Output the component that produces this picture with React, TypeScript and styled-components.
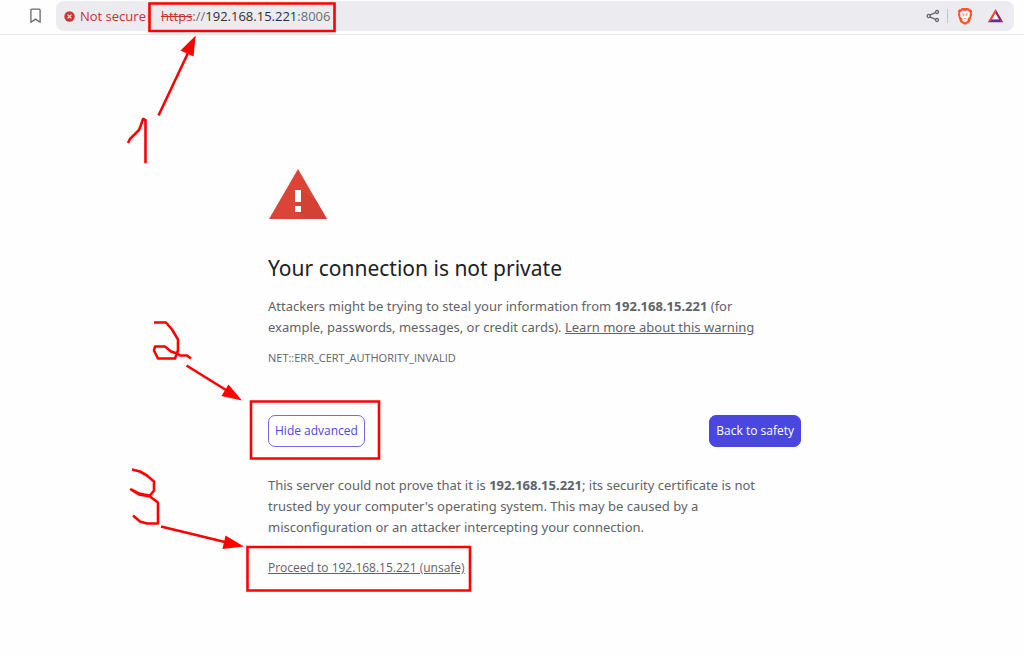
import React from "react";
import styled, { createGlobalStyle } from "styled-components";

const Global = createGlobalStyle`
  * { box-sizing: border-box; }
  body {
    margin: 0;
    background: #fefefe;
    color: #5f6368;
    font-family: "Noto Sans", sans-serif;
    font-size: 13px;
    line-height: 21px;
  }
`;

const Page = styled.div`
  position: relative;
  min-height: 100vh;
`;

const Toolbar = styled.header`
  display: flex;
  align-items: center;
  height: 35px;
  padding: 0 10px 2px 28px;
  border-bottom: 1px solid #e6e6e8;
`;

const IconButton = styled.button`
  display: flex;
  padding: 0;
  border: 0;
  background: none;
`;

const AddressBar = styled.div`
  display: flex;
  flex: 1;
  align-items: center;
  height: 30px;
  margin-left: 12px;
  padding: 0 10px 0 8px;
  border-radius: 8px;
  background: #ebebf0;
`;

const Security = styled.button`
  display: flex;
  align-items: center;
  gap: 5px;
  padding: 0;
  border: 0;
  background: none;
  color: #c5332b;
  font: 13px/20px "Open Sans", "Noto Sans", sans-serif;
  white-space: nowrap;
`;

const Url = styled.div`
  flex: 1;
  margin-left: 15px;
  color: #6b6e73;
  font-family: "Open Sans", "Noto Sans", sans-serif;
  font-size: 13px;
  line-height: 20px;
`;

const Scheme = styled.s`
  color: #c5332b;
`;

const Host = styled.span`
  color: #303136;
`;

const Actions = styled.div`
  display: flex;
  align-items: center;
`;

const Divider = styled.span`
  width: 1px;
  height: 14px;
  margin: 0 9px 0 7px;
  background: #c3c4ca;
`;

const Shields = styled(IconButton)`
  margin-right: 14px;
`;

const Warning = styled.main`
  max-width: 801px;
  margin: 134px 0 0;
  padding: 0 0 48px 268px;
`;

const Sign = styled.svg`
  display: block;
`;

const Title = styled.h1`
  margin: 32px 0 12px;
  color: #202124;
  font-size: 21px;
  font-weight: 400;
  line-height: 32px;
`;

const Text = styled.p`
  max-width: 512px;
  margin: 0;
`;

const TextLink = styled.a`
  color: inherit;
  text-decoration: underline;
`;

const ErrorCode = styled.div`
  margin-top: 10px;
  font-family: "Open Sans", "Noto Sans", sans-serif;
  font-size: 11px;
  line-height: 20px;
`;

const Buttons = styled.div`
  display: flex;
  justify-content: space-between;
  margin: 47px 0 28px;
`;

const Button = styled.button<{ $primary?: boolean }>`
  height: 32px;
  padding: 0 6px;
  border: 1px solid ${(p) => (p.$primary ? "#4a46e0" : "#716dea")};
  border-radius: 7px;
  background: ${(p) => (p.$primary ? "#4a46e0" : "#ffffff")};
  color: ${(p) => (p.$primary ? "#ffffff" : "#4c48dc")};
  font: 12px/20px "Open Sans", "Noto Sans", sans-serif;
  white-space: nowrap;
`;

const Proceed = styled.p`
  margin: 19px 0 0;
  font-family: "Open Sans", "Noto Sans", sans-serif;
  font-size: 12px;
`;

const Annotations = styled.svg`
  position: absolute;
  top: 0;
  left: 0;
  pointer-events: none;
`;

export default function App() {
  return (
    <Page>
      <Global />
      <Toolbar>
        <IconButton aria-label="Bookmark this page">
          <svg width="16" height="18" viewBox="0 0 16 18" fill="none" stroke="#66676d" strokeWidth="1.3">
            <path d="M3.9 2.1h7.2q1 0 1 1v12.2l-4.6-3.2-4.6 3.2V3.1q0-1 1-1z" strokeLinejoin="round" />
          </svg>
        </IconButton>
        <AddressBar>
          <Security>
            <svg width="11" height="11" viewBox="0 0 11 11">
              <circle cx="5.5" cy="5.5" r="5.2" fill="#c9372f" />
              <path d="M3.6 3.6l3.8 3.8M7.4 3.6L3.6 7.4" stroke="#ebebf0" strokeWidth="1.3" />
            </svg>
            Not secure
          </Security>
          <Url>
            <Scheme>https</Scheme>://<Host>192.168.15.221</Host>:8006
          </Url>
          <Actions>
            <IconButton aria-label="Share">
              <svg width="14" height="14" viewBox="0 0 14 14" fill="none" stroke="#66676d" strokeWidth="1.3">
                <path d="M3.7 6.2l5.8-2.5M3.7 7.8l5.8 2.5" />
                <circle cx="2.7" cy="7" r="1.6" />
                <circle cx="11" cy="3" r="1.5" />
                <circle cx="11" cy="11" r="1.5" />
              </svg>
            </IconButton>
            <Divider />
            <Shields aria-label="Brave Shields">
              <svg width="16" height="18" viewBox="0 0 16 18">
                <path d="M4.8 1h6.4l1.3 1.4 1.4-.2 1.3 2-.6 1.6.5 1.7-2 6.7q-.4 1-1.3 1.6L8.7 17.6q-.7.4-1.4 0l-3.1-1.8q-.9-.6-1.3-1.6l-2-6.7.5-1.7-.6-1.6 1.3-2 1.4.2z" fill="#fb542b" />
                <path d="M5.2 3.5L8 4l2.8-.5 2.4 2.7-.7 1.7.2 1.6-2.2 2.6.3 1.3L8 15.5l-2.8-2.1.3-1.3-2.2-2.6.2-1.6-.7-1.7z" fill="#fff" />
                <path d="M5 6.8l1.9.5-.3 2M11 6.8l-1.9.5.3 2M6.7 11.8L8 11.2l1.3.6" fill="none" stroke="#fb542b" strokeWidth=".7" />
              </svg>
            </Shields>
            <IconButton aria-label="Brave Rewards">
              <svg width="17" height="16" viewBox="0 0 17 16">
                <path d="M8.5 1L.7 14.2 5.2 11.3 8.5 5.4z" fill="#ff4724" />
                <path d="M8.5 1l7.8 13.2-4.5-2.9L8.5 5.4z" fill="#9e1f63" />
                <path d="M.7 14.2h15.6l-4.5-2.9H5.2z" fill="#662d91" />
                <path d="M8.5 5.4l3.3 5.9H5.2z" fill="#fff" />
              </svg>
            </IconButton>
          </Actions>
        </AddressBar>
      </Toolbar>

      <Warning>
        <Sign width="60" height="51" viewBox="0 0 60 51" role="img" aria-label="Warning">
          <path d="M30 0l29 50H1z" fill="#db4437" />
          <path d="M33 21l15 10 11 19H37l-9-8 5-1-6-7 6-1z" fill="#cf4034" opacity=".65" />
          <path d="M27 21h6v12h-6zM27 37h6v6h-6z" fill="#fff" />
        </Sign>
        <Title>Your connection is not private</Title>
        <Text>
          Attackers might be trying to steal your information from <b>192.168.15.221</b> (for
          example, passwords, messages, or credit cards). <TextLink href="#learn-more">Learn more about this warning</TextLink>
        </Text>
        <ErrorCode>NET::ERR_CERT_AUTHORITY_INVALID</ErrorCode>
        <Buttons>
          <Button>Hide advanced</Button>
          <Button $primary>Back to safety</Button>
        </Buttons>
        <Text>
          This server could not prove that it is <b>192.168.15.221</b>; its security certificate is not
          trusted by your computer's operating system. This may be caused by a
          misconfiguration or an attacker intercepting your connection.
        </Text>
        <Proceed>
          <TextLink href="#proceed">Proceed to 192.168.15.221 (unsafe)</TextLink>
        </Proceed>
      </Warning>

      <Annotations width="480" height="600" viewBox="0 0 480 600" aria-hidden="true">
        <g fill="none" stroke="#fe0000" strokeWidth="2.6">
          <path d="M149.5 3.5h185v27.5h-185zM251 401.5h128v57H251zM247.5 547h222.5v43.5H247.5z" />
          <path d="M158.5 115.5L188 53M186.5 365.5L226 390M161 526.5l64 15.5" />
          <g strokeLinejoin="round">
            <path d="M128 143l2-4 5-5 4-4 2-5 2-6 2.5 1v43" />
            <path d="M154 322.5h12l6 7 6 10v11l-3 8h-17l-4-8 1-4h10l6 5 6 2 3 2h7l4 3" />
            <path d="M132 469.500l8 2 7 4 7 6v9l-4 5-6-1-5-1-8-4 8 5 11 2 8 6v21h-11l-7-2-7-6" />
          </g>
        </g>
        <path d="M195.7 35.5L180.5 50.5l13 6zM242 400.5l-13.5-16-7 11.5zM244 546.5l-18.5-11-3 13.5z" fill="#fe0000" />
      </Annotations>
    </Page>
  );
}
